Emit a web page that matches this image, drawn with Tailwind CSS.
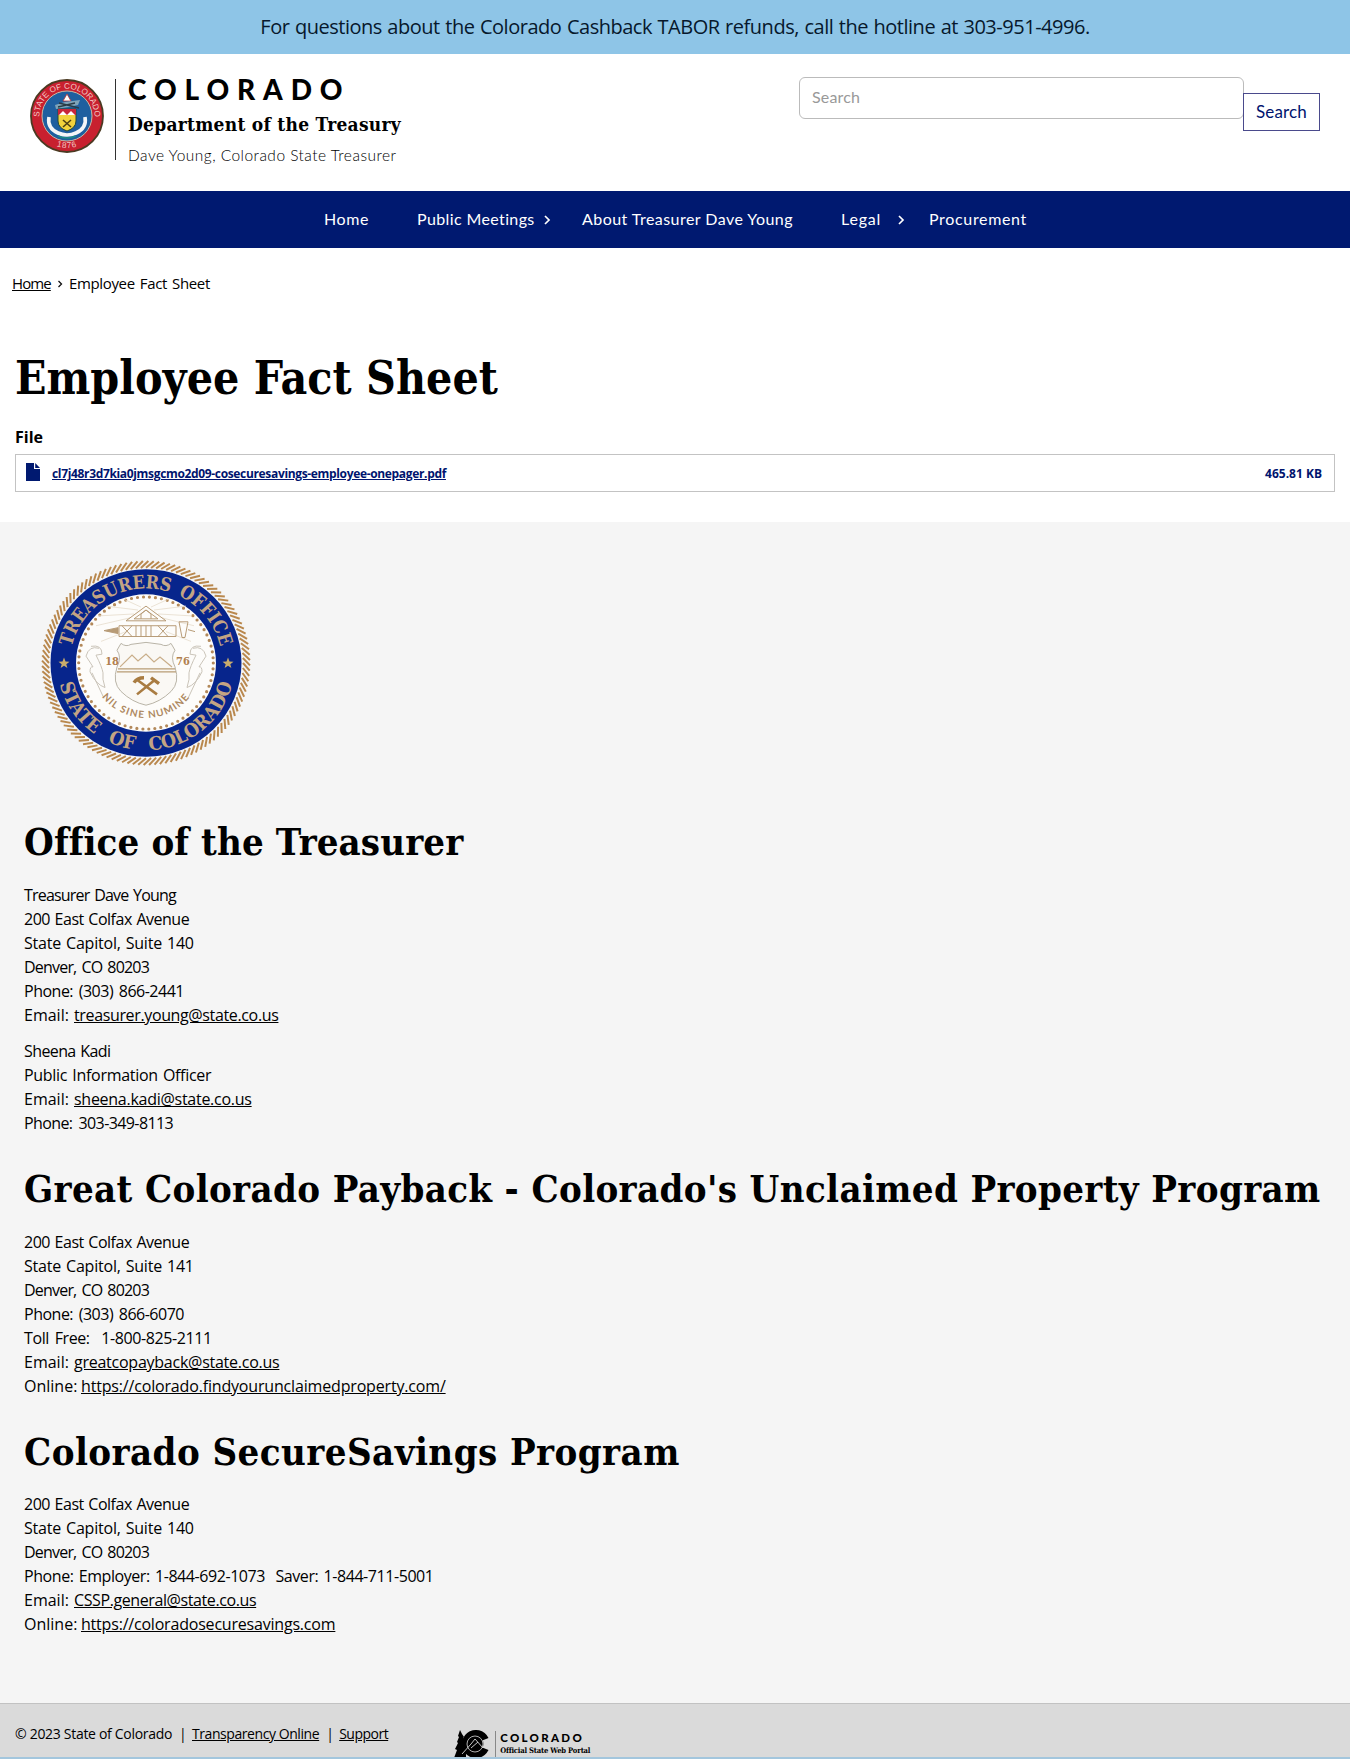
<!DOCTYPE html>
<html lang="en">
<head>
<meta charset="utf-8">
<title>Employee Fact Sheet</title>
<script src="https://cdn.jsdelivr.net/npm/@tailwindcss/browser@4"></script>
</head>
<body class="bg-white text-black font-['Open_Sans',sans-serif] text-[16px] leading-6">
<div class="w-[1350px] h-[1759px] overflow-hidden flex flex-col">
  <div class="h-[54px] shrink-0 bg-[#8ec5e7] flex items-center justify-center text-[20px] text-[#07182c] tracking-[-0.48px] [word-spacing:0.8px]">For questions about the Colorado Cashback TABOR refunds, call the hotline at 303-951-4996.</div>

  <header class="h-[137px] shrink-0 flex justify-between px-[30px]">
    <div class="flex">
      <svg class="w-[74px] h-[74px] mt-[25px]" viewBox="-37 -37 74 74">
        <defs><path id="st" d="M-27 6A27.6 27.6 0 1 1 27 6"/><path id="sb" d="M-32 0A32 32 0 0 0 32 0"/></defs>
        <circle r="36" fill="#c8202f" stroke="#4b3a22" stroke-width="1.8"/>
        <circle r="25" fill="#1f5f9f" stroke="#c9b9a4" stroke-width="1"/>
        <path d="M0-22L-4-15H4Z" fill="#fff" stroke="#b33" stroke-width=".8"/>
        <path d="M-12-11L-2-14L13-16L11-11L2-9L-11-7Z" fill="#7ea3b8"/>
        <path d="M-9-9L8-13M-8-13L12-8" stroke="#283b46" stroke-width="1.3"/>
        <path d="M-9-7H9V5Q9 12 0 15Q-9 12-9 5Z" fill="#f1d23c" stroke="#274a35"/>
        <path d="M-9-7H9V-1H-9Z" fill="#c8263a"/><path d="M-8-1L-4-5L0-1L4-5L8-1Z" fill="#fff"/>
        <path d="M-4 4L4 11M4 4L-4 11" stroke="#4c3f15" stroke-width="1.6"/>
        <path d="M-18 1Q-20 12-9 17Q0 21 9 17Q20 12 18 1" fill="none" stroke="#f4f6f8" stroke-width="3.6"/>
        <path d="M-9 20Q0 24 9 20" fill="none" stroke="#1b8b86" stroke-width="1.5"/>
        <g class="font-['Liberation_Sans',sans-serif]" fill="#f3c9c4" font-size="8.2" text-anchor="middle">
          <text><textPath href="#st" startOffset="50%">STATE OF COLORADO</textPath></text>
          <text><textPath href="#sb" startOffset="50%" letter-spacing=".8">1876</textPath></text></g>
      </svg>
      <div class="w-px h-[81px] bg-[#333] ml-[11px] mt-[25px]"></div>
      <div class="ml-[12px] mt-[20px] flex flex-col items-start whitespace-nowrap">
        <div class="h-[30px] leading-[30px] font-['Lato',sans-serif] font-black text-[28px] tracking-[7.9px]">COLORADO</div>
        <div class="mt-[6px] h-[28px] leading-[28px] font-['DejaVu_Serif_Condensed','DejaVu_Serif',serif] font-bold text-[19px] tracking-[0.27px]">Department of the Treasury</div>
        <div class="mt-[5px] h-6 leading-6 font-['Lato',sans-serif] font-light text-[15.5px] tracking-[0.47px]">Dave Young, Colorado State Treasurer</div>
      </div>
    </div>
    <form class="flex items-start font-['Lato',sans-serif]">
      <div class="w-[445px] h-[42px] mt-[23px] border border-[#bbb] rounded-md px-3 pb-[2px] flex items-center text-[#999] tracking-[0.15px]">Search</div>
      <div class="-ml-px w-[77px] h-[38px] mt-[39px] border border-[#4a4a8c] flex items-center justify-center text-[#00146e] text-[17px] tracking-[0.16px]">Search</div>
    </form>
  </header>

  <nav class="h-[57px] shrink-0 bg-[#001970] text-white flex items-center pl-[324px] pb-[2px] font-['Lato',sans-serif] whitespace-nowrap">
    <span class="w-[93px] tracking-[0.6px]">Home</span>
    <span class="w-[126px] tracking-[0.38px]">Public Meetings</span>
    <svg class="w-[8px] h-[10px] mr-[31px] mt-[2px]" viewBox="0 0 8 10" fill="none" stroke="#fff" stroke-width="1.7"><path d="M2 1L6 5L2 9"/></svg>
    <span class="w-[259px] tracking-[0.45px]">About Treasurer Dave Young</span>
    <span class="w-[56px] tracking-[0.8px]">Legal</span>
    <svg class="w-[8px] h-[10px] mr-[24px] mt-[2px]" viewBox="0 0 8 10" fill="none" stroke="#fff" stroke-width="1.7"><path d="M2 1L6 5L2 9"/></svg>
    <span class="tracking-[0.66px]">Procurement</span>
  </nav>

  <main class="h-[274px] shrink-0 flex flex-col">
    <div class="h-6 mt-[23px] pl-[12px] flex items-center text-[15px]">
      <a class="w-[38px] tracking-[-0.9px] underline whitespace-nowrap">Home</a>
      <svg class="w-[6px] h-[8px] ml-[7px] mr-[6px] mt-[2px]" viewBox="0 0 6 8" fill="none" stroke="#111" stroke-width="1.3"><path d="M1.5 1L4.5 4L1.5 7"/></svg>
      <span class="tracking-[-0.35px] [word-spacing:1.5px]">Employee Fact Sheet</span>
    </div>
    <h1 class="mt-[55px] ml-[15px] h-[56px] leading-[56px] font-['DejaVu_Serif_Condensed','DejaVu_Serif',serif] font-bold text-[46px]">Employee Fact Sheet</h1>
    <div class="mt-[19px] ml-[15px] font-bold">File</div>
    <div class="mt-[5px] mx-[15px] h-[38px] border border-[#c3c3c3] flex items-center pl-[10px] pr-[12px] text-[12px] font-bold text-[#00146e]">
      <svg class="w-[14px] h-[18px] mb-[2px]" viewBox="0 0 14 18"><path d="M0 0H8V6H14V18H0Z M9.2 0L14 5H9.2Z" fill="#001970"/></svg>
      <a class="ml-[12px] mt-[2px] underline tracking-[-0.34px]">cl7j48r3d7kia0jmsgcmo2d09-cosecuresavings-employee-onepager.pdf</a>
      <span class="ml-auto mt-[2px]">465.81 KB</span>
    </div>
  </main>

  <section class="h-[1181px] shrink-0 bg-[#f5f5f5] pl-[24px] flex flex-col items-start whitespace-nowrap">
    <svg class="w-[210px] h-[206px] mt-[38px] ml-[17px]" viewBox="-105 -105 210 210" preserveAspectRatio="none">
      <defs>
        <path id="tt" d="M-76 0A76 76 0 0 1 76 0"/><path id="tb" d="M-89 0A89 89 0 0 0 89 0"/>
        <path id="tn" d="M-56 0A56 56 0 0 0 56 0"/>
        <g id="ribbon"><path d="M55-17Q44-19 44-9L50-8Q44 4 43 10Q44 16 41 25Q50 22 56 9Q56 3 53 4L60-7Q57-18 47-15"/></g>
      </defs>
      <g id="rope" stroke="#b9884e" stroke-width="2"></g>
      <circle r="95.5" fill="#07258c"/>
      <circle r="70" fill="#fdfcfa"/>
      <circle r="67.3" fill="none" stroke="#b3895a" stroke-width="3.2" stroke-linecap="round" stroke-dasharray="0 6.04"/>
      <g fill="#c3a483" class="font-['DejaVu_Serif_Condensed','DejaVu_Serif',serif] font-bold" font-size="19" text-anchor="middle">
        <text word-spacing="3"><textPath href="#tt" startOffset="50%" textLength="205" lengthAdjust="spacingAndGlyphs">TREASURERS OFFICE</textPath></text>
        <text word-spacing="9"><textPath href="#tb" startOffset="50%" textLength="236" lengthAdjust="spacingAndGlyphs">STATE OF COLORADO</textPath></text>
      </g>
      <g fill="#c9ac6c"><path id="star" d="M-82-5.500L-80.500-1.500L-76.500-1.300L-79.700 1.200L-78.600 5L-82 2.700L-85.400 5L-84.300 1.200L-87.500-1.300L-83.500-1.500Z"/><use href="#star" x="164"/></g>
      <g fill="none" stroke="#e6dccb" stroke-width=".8"><path d="M-8-54L-40-58M-12-50L-48-48M-16-46L-50-38M8-54L40-58M12-50L46-48M16-46L48-38M-5-57L-22-65M5-57L22-65M-20-32L-45-22M20-32L45-22"/></g>
      <g fill="none" stroke="#b79b76" stroke-width="1">
        <path d="M0-58L-20-43H20Z M0-54L-12-45H12Z M-5-45V-50L0-54L5-50V-45"/>
        <path d="M-42-33L-28-36V-30Z" fill="#b79b76"/>
        <path d="M-27-38H30V-27H-27Z M-24-38L-14-27M-14-38L-24-27M-10-38V-27M-5-38V-27M0-38V-27M5-38V-27M12-38L22-27M22-38L12-27M33-42L36-26H39L42-42Z M42-34L49-32"/>
      </g>
      <g fill="none" stroke="#c9c3b8" stroke-width="1">
        <use href="#ribbon"/><use href="#ribbon" transform="scale(-1 1)"/>
        <path d="M-54 10L-42 36M42 36L54 10"/>
        <path d="M-25-20Q-20-16-15-19L0-21L15-19Q20-16 25-20L29-13Q24-6 29 4Q34 20 25 29Q14 40 0 43Q-14 40-25 29Q-34 20-29 4Q-24-6-29-13Z" fill="#faf8f4" stroke="#b8b3a6"/>
      </g>
      <path d="M-26 4L-14-8L-8-2L0-9L8-1L14-6L26 4" fill="none" stroke="#c9ae8a" stroke-width="1.2"/>
      <path d="M-28 6H29M-29 9H30" stroke="#b89c74" stroke-width="1.4"/>
      <path d="M-9 17L11 32M9 17L-9 32" stroke="#a97c42" stroke-width="2.6"/>
      <path d="M-12 20Q-9 15-2 15M5 15L13 21" stroke="#a97c42" stroke-width="3.4" fill="none"/>
      <g fill="#b07f4f" class="font-['DejaVu_Serif_Condensed','DejaVu_Serif',serif] font-bold" font-size="11" text-anchor="middle">
        <text x="-34" y="2">18</text><text x="37" y="2">76</text></g>
      <g fill="#ad8860" class="font-['Lato',sans-serif] font-bold" font-size="10" text-anchor="middle">
        <text><textPath href="#tn" startOffset="50%" letter-spacing="1.2">NIL SINE NUMINE</textPath></text></g>
    </svg>

    <h2 class="mt-[54px] h-[44px] leading-[44px] font-['DejaVu_Serif_Condensed','DejaVu_Serif',serif] font-bold text-[38px] tracking-[0.11px]">Office of the Treasurer</h2>
    <div class="mt-[19px] flex flex-col">
      <span class="tracking-[-0.8px] [word-spacing:1.3px]">Treasurer Dave Young</span>
      <span class="tracking-[-0.5px] [word-spacing:1px]">200 East Colfax Avenue</span>
      <span class="tracking-[-0.2px] [word-spacing:1px]">State Capitol, Suite 140</span>
      <span class="tracking-[-0.8px] [word-spacing:1.6px]">Denver, CO 80203</span>
      <span class="tracking-[-0.5px] [word-spacing:2px]">Phone: (303) 866-2441</span>
      <span class="flex"><span class="w-[50px]">Email:</span><a class="underline tracking-[-0.36px]">treasurer.young@state.co.us</a></span>
    </div>
    <div class="mt-3 flex flex-col">
      <span class="tracking-[-0.6px] [word-spacing:1px]">Sheena Kadi</span>
      <span class="tracking-[-0.3px] [word-spacing:1.3px]">Public Information Officer</span>
      <span class="flex"><span class="w-[50px]">Email:</span><a class="underline tracking-[-0.27px]">sheena.kadi@state.co.us</a></span>
      <span class="tracking-[-0.6px] [word-spacing:2.500px]">Phone: 303-349-8113</span>
    </div>

    <h2 class="mt-[32px] h-[44px] leading-[44px] font-['DejaVu_Serif_Condensed','DejaVu_Serif',serif] font-bold text-[38px] tracking-[0.35px]">Great Colorado Payback - Colorado's Unclaimed Property Program</h2>
    <div class="mt-[19px] flex flex-col">
      <span class="tracking-[-0.5px] [word-spacing:1px]">200 East Colfax Avenue</span>
      <span class="tracking-[-0.2px] [word-spacing:1px]">State Capitol, Suite 141</span>
      <span class="tracking-[-0.8px] [word-spacing:1.6px]">Denver, CO 80203</span>
      <span class="tracking-[-0.5px] [word-spacing:2px]">Phone: (303) 866-6070</span>
      <span class="tracking-[-0.4px] [word-spacing:2px]">Toll Free:&nbsp; 1-800-825-2111</span>
      <span class="flex"><span class="w-[50px]">Email:</span><a class="underline tracking-[-0.25px]">greatcopayback@state.co.us</a></span>
      <span class="flex"><span class="w-[57px]">Online:</span><a class="underline tracking-[-0.17px]">https://colorado.findyourunclaimedproperty.com/</a></span>
    </div>

    <h2 class="mt-[32px] h-[44px] leading-[44px] font-['DejaVu_Serif_Condensed','DejaVu_Serif',serif] font-bold text-[38px] tracking-[0.43px]">Colorado SecureSavings Program</h2>
    <div class="mt-[18px] flex flex-col">
      <span class="tracking-[-0.5px] [word-spacing:1px]">200 East Colfax Avenue</span>
      <span class="tracking-[-0.2px] [word-spacing:1px]">State Capitol, Suite 140</span>
      <span class="tracking-[-0.8px] [word-spacing:1.6px]">Denver, CO 80203</span>
      <span class="tracking-[-0.43px] [word-spacing:1.500px]">Phone: Employer: 1-844-692-1073&nbsp; Saver: 1-844-711-5001</span>
      <span class="flex"><span class="w-[50px]">Email:</span><a class="underline tracking-[-0.4px]">CSSP.general@state.co.us</a></span>
      <span class="flex"><span class="w-[57px]">Online:</span><a class="underline tracking-[-0.2px]">https://coloradosecuresavings.com</a></span>
    </div>
  </section>

  <footer class="h-[54px] shrink-0 bg-[#dadada] border-t border-[#c2c2c2] flex items-start pl-[15px] whitespace-nowrap text-[14px]">
    <div class="flex mt-[18px]">
      <span class="w-[164px] tracking-[-0.3px]">© 2023 State of Colorado</span><span class="w-[13px]">|</span>
      <a class="underline tracking-[-0.43px]">Transparency Online</a><span class="ml-[7px] w-[13px]">|</span>
      <a class="underline tracking-[-0.5px]">Support</a>
    </div>
    <svg class="w-[36px] h-[28px] ml-[66px] mt-[26px]" viewBox="0 0 36 28">
      <path d="M6 0L8 4L10 7L9 8L12 12V28H0L3 20L1 19L4 13L3 12L5 7L4 6Z"/>
      <path d="M34.500 8A14 14 0 1 0 34.500 20L27 17A7 7 0 1 1 27 11Z"/>
      <circle cx="21" cy="14" r="8.500"/>
      <circle cx="21" cy="14" r="8" fill="none" stroke="#dadada" stroke-width=".8"/>
      <path d="M8 24L17 14L21 9L29 18M17 18L24 12" fill="none" stroke="#dadada" stroke-width=".9"/>
    </svg>
    <div class="w-px h-[26px] bg-[#888] mt-[27px] ml-[5px]"></div>
    <div class="ml-[4px] mt-[26px] flex flex-col">
      <span class="h-[16px] leading-[16px] text-[11.5px] font-['Lato',sans-serif] font-black tracking-[2.3px]">COLORADO</span>
      <span class="h-[10px] leading-[10px] text-[7.6px] font-['DejaVu_Serif_Condensed','DejaVu_Serif',serif] font-bold tracking-[-0.19px]">Official State Web Portal</span>
    </div>
  </footer>
  <div class="h-[2px] shrink-0 bg-[#a3c6dd]"></div>
</div>
<script>
// Twisted rope border round the treasurer's seal
let d = '';
for (let i = 0; i < 120; i++) {
  const a = i * Math.PI / 60, b = a + 0.075;
  d += `M${97 * Math.cos(a)} ${97 * Math.sin(a)}L${104 * Math.cos(b)} ${104 * Math.sin(b)}`;
}
document.getElementById('rope').innerHTML = `<path d="${d}"/>`;
</script>
</body>
</html>
